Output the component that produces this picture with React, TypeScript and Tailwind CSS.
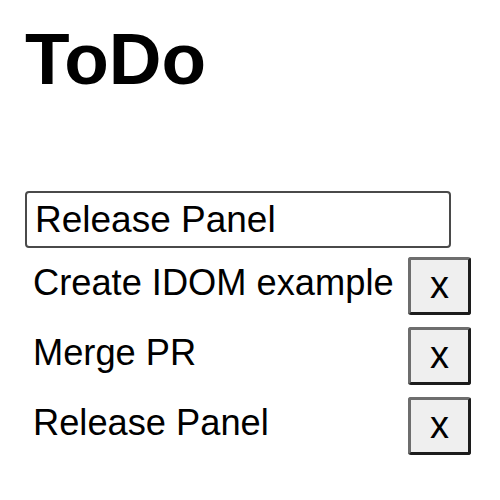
import React from "react";

const items = ["Create IDOM example", "Merge PR", "Release Panel"];

export default function App() {
  return (
    <div
      className="min-h-[500px] w-[500px] bg-white pl-[25px] pt-[22px] text-black"
      style={{ fontFamily: '"Liberation Sans", Arial, sans-serif' }}
    >
      <h1 className="text-[73px] font-bold leading-none">ToDo</h1>
      <input
        className="mt-[96px] block h-[57px] w-[426px] rounded-[4px] border-2 border-[#4a4a4a] pl-[8px] text-[37px] text-black outline-none"
        style={{ fontFamily: '"Liberation Sans", Arial, sans-serif' }}
        defaultValue="Release Panel"
      />
      <div className="mt-[9px] flex flex-col gap-[12px] pl-[8px]">
        {items.map((t, i) => (
          <div key={i} className="flex h-[58px] items-center">
            <span className="mb-[5px] w-[375px] text-[36.25px] leading-normal">{t}</span>
            <button
              className="flex h-[58px] w-[63px] items-center justify-center rounded-[3px] border-[3px] border-t-[#6e6e6e] border-l-[#6e6e6e] border-b-[#1c1c1c] border-r-[#1c1c1c] bg-[#efefef] pb-[2px] text-[38px] leading-none"
            >
              x
            </button>
          </div>
        ))}
      </div>
    </div>
  );
}
